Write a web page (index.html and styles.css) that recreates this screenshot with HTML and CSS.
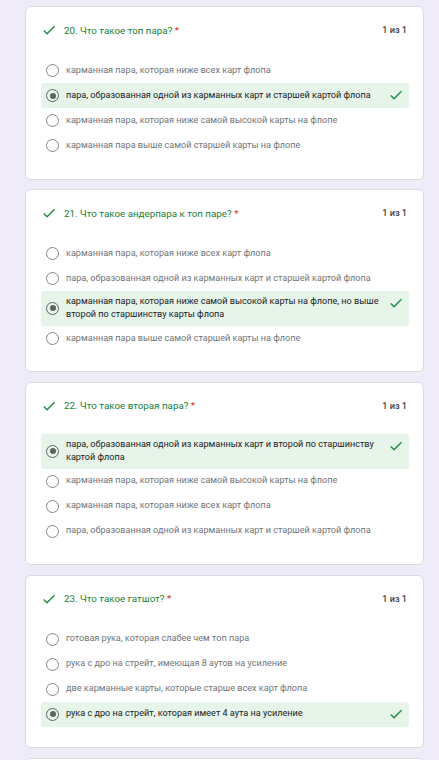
FILE: index.html
```html
<!DOCTYPE html>
<html lang="ru">
<head>
<meta charset="utf-8">
<title>Результаты</title>
<link rel="stylesheet" href="styles.css">
</head>
<body>
<main class="page">

<section class="card">
  <div class="q-head">
    <svg class="q-check" viewBox="0 0 24 24"><path d="M9 16.17L4.83 12l-1.42 1.41L9 19 21 7l-1.41-1.41z"/></svg>
    <div class="q-title">20. Что такое топ пара? <span class="req">*</span></div>
    <div class="q-score">1 из 1</div>
  </div>
  <div class="options">
    <div class="opt"><span class="radio"></span><span class="opt-text">карманная пара, которая ниже всех карт флопа</span></div>
    <div class="opt correct"><span class="radio on"></span><span class="opt-text">пара, образованная одной из карманных карт и старшей картой флопа</span><svg class="opt-check" viewBox="0 0 24 24"><path d="M9 16.17L4.83 12l-1.42 1.41L9 19 21 7l-1.41-1.41z"/></svg></div>
    <div class="opt"><span class="radio"></span><span class="opt-text">карманная пара, которая ниже самой высокой карты на флопе</span></div>
    <div class="opt"><span class="radio"></span><span class="opt-text">карманная пара выше самой старшей карты на флопе</span></div>
  </div>
</section>

<section class="card">
  <div class="q-head">
    <svg class="q-check" viewBox="0 0 24 24"><path d="M9 16.17L4.83 12l-1.42 1.41L9 19 21 7l-1.41-1.41z"/></svg>
    <div class="q-title">21. Что такое андерпара к топ паре? <span class="req">*</span></div>
    <div class="q-score">1 из 1</div>
  </div>
  <div class="options">
    <div class="opt"><span class="radio"></span><span class="opt-text">карманная пара, которая ниже всех карт флопа</span></div>
    <div class="opt"><span class="radio"></span><span class="opt-text">пара, образованная одной из карманных карт и старшей картой флопа</span></div>
    <div class="opt correct"><span class="radio on"></span><span class="opt-text">карманная пара, которая ниже самой высокой карты на флопе, но выше второй по старшинству карты флопа</span><svg class="opt-check" viewBox="0 0 24 24"><path d="M9 16.17L4.83 12l-1.42 1.41L9 19 21 7l-1.41-1.41z"/></svg></div>
    <div class="opt"><span class="radio"></span><span class="opt-text">карманная пара выше самой старшей карты на флопе</span></div>
  </div>
</section>

<section class="card">
  <div class="q-head">
    <svg class="q-check" viewBox="0 0 24 24"><path d="M9 16.17L4.83 12l-1.42 1.41L9 19 21 7l-1.41-1.41z"/></svg>
    <div class="q-title">22. Что такое вторая пара? <span class="req">*</span></div>
    <div class="q-score">1 из 1</div>
  </div>
  <div class="options">
    <div class="opt correct"><span class="radio on"></span><span class="opt-text">пара, образованная одной из карманных карт и второй по старшинству картой флопа</span><svg class="opt-check" viewBox="0 0 24 24"><path d="M9 16.17L4.83 12l-1.42 1.41L9 19 21 7l-1.41-1.41z"/></svg></div>
    <div class="opt"><span class="radio"></span><span class="opt-text">карманная пара, которая ниже самой высокой карты на флопе</span></div>
    <div class="opt"><span class="radio"></span><span class="opt-text">карманная пара, которая ниже всех карт флопа</span></div>
    <div class="opt"><span class="radio"></span><span class="opt-text">пара, образованная одной из карманных карт и старшей картой флопа</span></div>
  </div>
</section>

<section class="card">
  <div class="q-head">
    <svg class="q-check" viewBox="0 0 24 24"><path d="M9 16.17L4.83 12l-1.42 1.41L9 19 21 7l-1.41-1.41z"/></svg>
    <div class="q-title">23. Что такое гатшот? <span class="req">*</span></div>
    <div class="q-score">1 из 1</div>
  </div>
  <div class="options">
    <div class="opt"><span class="radio"></span><span class="opt-text">готовая рука, которая слабее чем топ пара</span></div>
    <div class="opt"><span class="radio"></span><span class="opt-text">рука с дро на стрейт, имеющая 8 аутов на усиление</span></div>
    <div class="opt"><span class="radio"></span><span class="opt-text">две карманные карты, которые старше всех карт флопа</span></div>
    <div class="opt correct"><span class="radio on"></span><span class="opt-text">рука с дро на стрейт, которая имеет 4 аута на усиление</span><svg class="opt-check" viewBox="0 0 24 24"><path d="M9 16.17L4.83 12l-1.42 1.41L9 19 21 7l-1.41-1.41z"/></svg></div>
  </div>
</section>

<section class="card"></section>

</main>
</body>
</html>
```

FILE: styles.css
```css
html, body {
  margin: 0;
  padding: 0;
  background: #f0ebf8;
}

body {
  font-family: Roboto, "Noto Sans", Arial, sans-serif;
  color: #202124;
  overflow: hidden;
}

.page {
  padding: 6px 15px 0 25px;
}

.card {
  background: #fff;
  border: 1px solid #dadce0;
  border-radius: 6px;
  padding: 16px 14px 20.5px 15px;
  margin-bottom: 9.5px;
  min-height: 60px;
}

.q-head {
  display: flex;
  align-items: center;
  height: 14px;
}

.q-check {
  width: 16px;
  height: 16px;
  fill: #1e8e3e;
  flex: none;
  margin-right: 7px;
}

.q-title {
  flex: 1;
  font-size: 9.8px;
  color: #188038;
}

.req {
  color: #d93025;
}

.q-score {
  font-size: 9.1px;
  font-weight: 500;
  color: #3c4043;
  margin-right: 2px;
}

.options {
  margin-top: 21px;
}

.opt {
  display: flex;
  align-items: center;
  box-sizing: border-box;
  min-height: 25px;
  padding: 4px 5px;
  border-radius: 3px;
}

.opt.correct {
  background: #e6f4ea;
}

.radio {
  flex: none;
  box-sizing: border-box;
  width: 13px;
  height: 13px;
  border: 1.4px solid #80868b;
  border-radius: 50%;
  margin-right: 7px;
  display: flex;
  align-items: center;
  justify-content: center;
}

.radio.on {
  border-color: #5f6368;
}

.radio.on::after {
  content: "";
  width: 6px;
  height: 6px;
  border-radius: 50%;
  background: #5f6368;
}

.opt-text {
  flex: 1;
  font-size: 9.1px;
  line-height: 13.4px;
  color: #70757a;
}

.opt.correct .opt-text {
  color: #202124;
}

.opt-check {
  flex: none;
  align-self: flex-start;
  width: 16px;
  height: 16px;
  fill: #1e8e3e;
  margin-left: 4px;
}
```
